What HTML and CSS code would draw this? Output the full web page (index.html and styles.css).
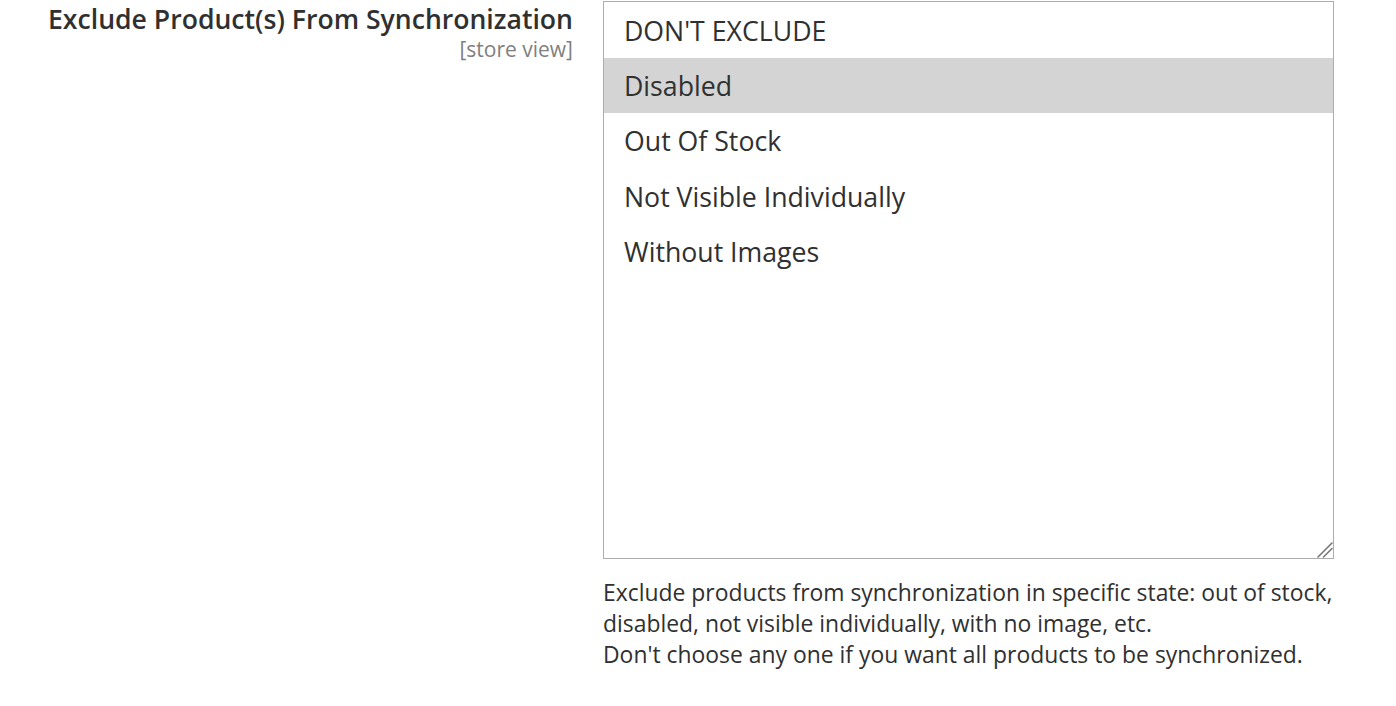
FILE: index.html
```html
<!DOCTYPE html>
<html lang="en">
<head>
<meta charset="utf-8">
<title>Exclude Product(s) From Synchronization</title>
<link rel="stylesheet" href="styles.css">
</head>
<body>
<div class="field">
  <div class="label">
    <span class="label-text">Exclude Product(s) From Synchronization</span>
    <span class="scope">[store view]</span>
  </div>
  <div class="control">
    <div class="listbox" role="listbox" aria-multiselectable="true">
      <div class="option" role="option">DON'T EXCLUDE</div>
      <div class="option selected" role="option" aria-selected="true">Disabled</div>
      <div class="option" role="option">Out Of Stock</div>
      <div class="option" role="option">Not Visible Individually</div>
      <div class="option" role="option">Without Images</div>
      <svg class="grip" width="16" height="16" viewBox="0 0 16 16" aria-hidden="true">
        <line x1="1" y1="15" x2="15" y2="1" />
        <line x1="6.5" y1="15" x2="15" y2="6.5" />
      </svg>
    </div>
    <p class="note">Exclude products from synchronization in specific state: out of stock,<br>disabled, not visible individually, with no image, etc.<br>Don't choose any one if you want all products to be synchronized.</p>
  </div>
</div>
</body>
</html>
```
FILE: styles.css
```css
html, body {
  margin: 0;
  padding: 0;
  background: #ffffff;
}
body {
  font-family: "Open Sans", "Liberation Sans", sans-serif;
  color: #303030;
}
.field {
  display: flex;
  align-items: flex-start;
  padding-top: 1px;
}
.label {
  width: 573px;
  flex: none;
  display: flex;
  flex-direction: column;
  align-items: flex-end;
  padding-right: 30px;
  box-sizing: content-box;
}
.label-text {
  font-size: 26.6px;
  font-weight: 600;
  line-height: 36px;
  margin-top: 0;
}
.scope {
  font-size: 21px;
  color: #808080;
  line-height: 24px;
  margin-top: 0;
}
.control {
  width: 731px;
  flex: none;
}
.listbox {
  position: relative;
  box-sizing: border-box;
  height: 558px;
  border: 1px solid #adadad;
  padding-top: 1px;
}
.option {
  font-size: 26.7px;
  line-height: 55.2px;
  padding-left: 20px;
  color: #303030;
  white-space: nowrap;
}
.option.selected {
  background: #d4d4d4;
}
.grip {
  position: absolute;
  right: 0;
  bottom: 0;
  stroke: #777777;
  stroke-width: 1.6;
  stroke-linecap: round;
}
.note {
  margin: 18px 0 0;
  font-size: 22.9px;
  line-height: 31px;
  color: #303030;
  white-space: nowrap;
}
```
